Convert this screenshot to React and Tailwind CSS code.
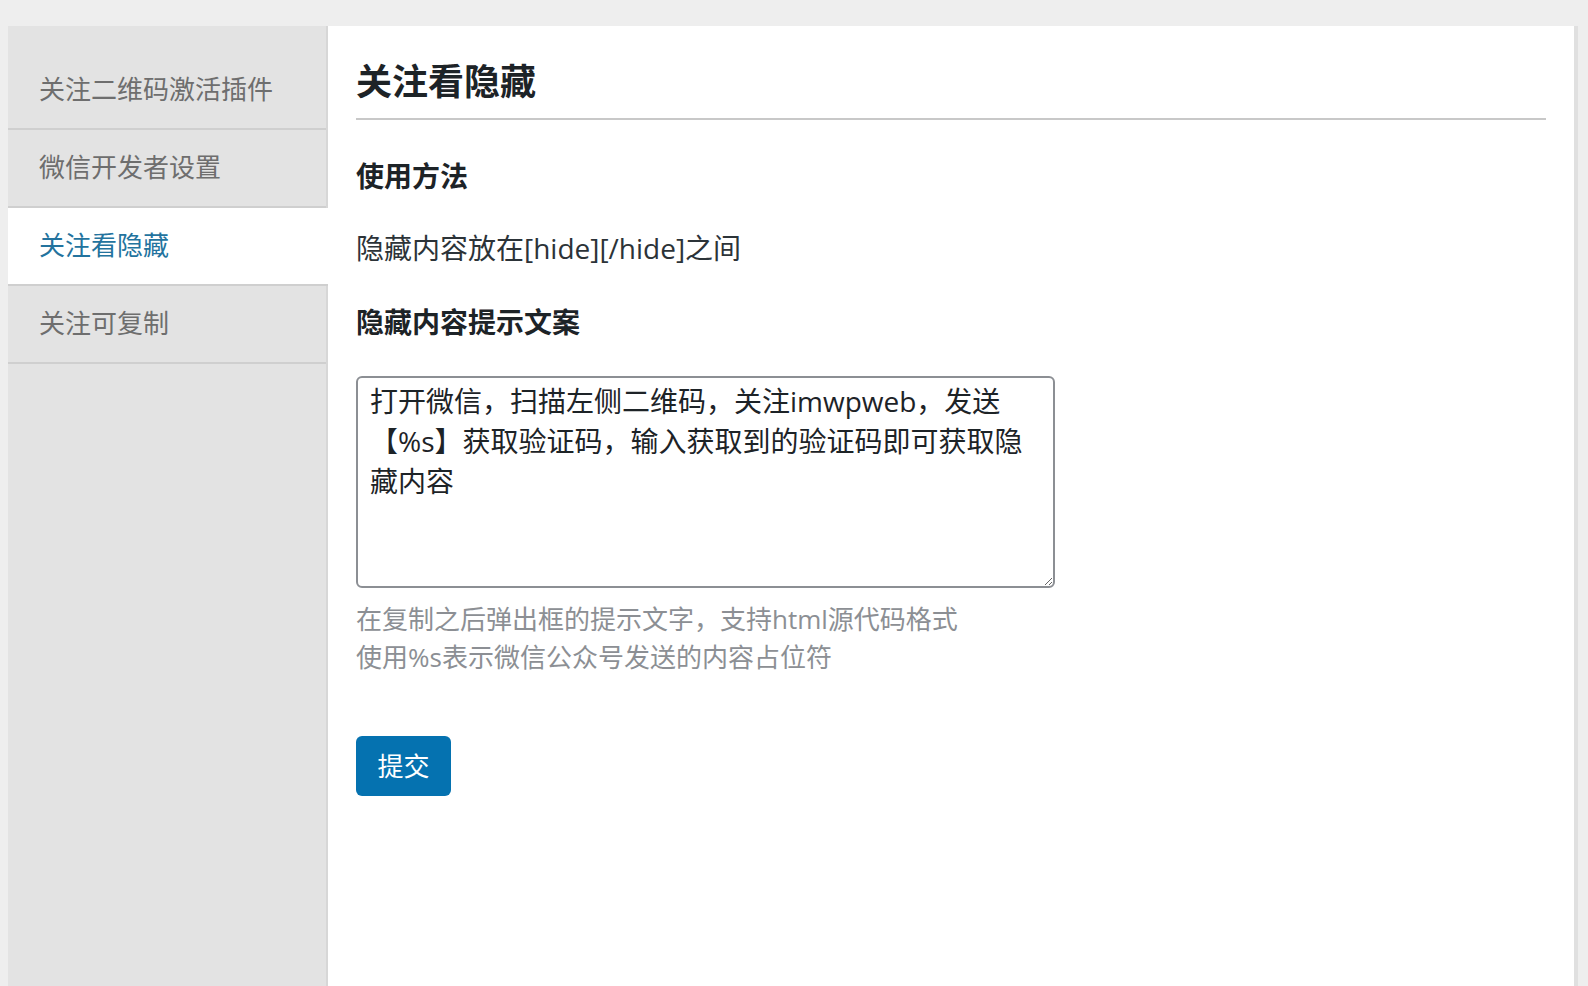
import React from "react";

const menu = ["关注二维码激活插件", "微信开发者设置", "关注看隐藏", "关注可复制"];

export default function App() {
  const active = 2;
  return (
    <div className="h-screen flex flex-col bg-[#eeeeee] pt-[26px] pl-2 pr-[10px] font-['Open_Sans','Noto_Sans_CJK_SC',sans-serif]">
      <div className="flex-1 flex border-r-4 border-[#e0e0e0]">
        {/* Sidebar */}
        <aside className="w-[320px] shrink-0 bg-[#e3e3e3] border-r-2 border-[#d7d7d7] pt-[26px]">
          {menu.map((item, i) => (
            <div
              key={item}
              className={
                i === active
                  ? "h-[78px] -mr-[2px] bg-white border-b-2 border-[#cfcfcf] flex items-center pl-[31px] text-[26px] text-[#23739e] font-['Liberation_Serif','Noto_Sans_CJK_SC',serif]"
                  : "h-[78px] border-b-2 border-[#cfcfcf] flex items-center pl-[31px] text-[26px] text-[#6e6e6e] font-['Liberation_Serif','Noto_Sans_CJK_SC',serif]"
              }
            >
              {item}
            </div>
          ))}
        </aside>

        {/* Content */}
        <main className="flex-1 bg-white px-[28px]">
          <h1 className="mt-[32px] pb-[12px] border-b-2 border-[#c8c8c8] text-[36px] leading-[48px] font-bold text-[#1d2327]">
            关注看隐藏
          </h1>

          <h2 className="mt-[36px] text-[28px] leading-[40px] font-bold text-[#1d2327]">使用方法</h2>
          <p className="mt-[32px] text-[28px] leading-[40px] text-[#2c3338]">隐藏内容放在[hide][/hide]之间</p>

          <h2 className="mt-[34px] text-[28px] leading-[40px] font-bold text-[#1d2327]">隐藏内容提示文案</h2>

          <textarea
            className="block mt-[34px] w-[699px] h-[212px] border-2 border-[#8c8f94] rounded-md px-3 pt-[3px] text-[28px] leading-[40px] text-[#1d2327] outline-none"
            defaultValue="打开微信，扫描左侧二维码，关注imwpweb，发送【%s】获取验证码，输入获取到的验证码即可获取隐藏内容"
          />
          <p className="mt-[12px] text-[26px] leading-[38px] text-[#8c8f94]">
            在复制之后弹出框的提示文字，支持html源代码格式
            <br />
            使用%s表示微信公众号发送的内容占位符
          </p>

          <button className="mt-[60px] h-[60px] w-[95px] rounded-md bg-[#0572b0] text-white text-[26px]">
            提交
          </button>
        </main>
      </div>
    </div>
  );
}
